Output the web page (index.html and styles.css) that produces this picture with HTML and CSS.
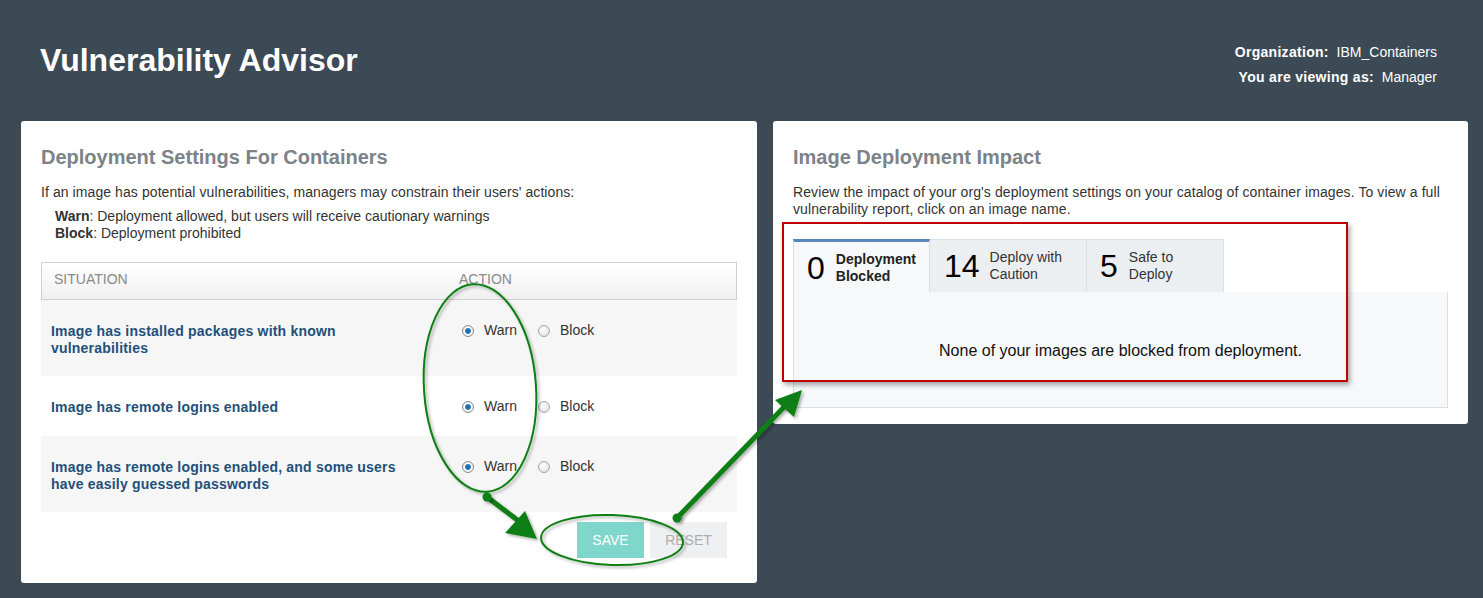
FILE: index.html
```html
<!DOCTYPE html>
<html>
<head>
<meta charset="utf-8">
<title>Vulnerability Advisor</title>
<link rel="stylesheet" href="styles.css">
</head>
<body>
<div class="page">
  <header class="topbar">
    <h1 class="title">Vulnerability Advisor</h1>
    <div class="org">
      <div class="org-line"><b>Organization:</b>&nbsp; IBM_Containers</div>
      <div class="org-line"><b>You are viewing as:</b>&nbsp; Manager</div>
    </div>
  </header>

  <main class="cards">
    <section class="card card-left">
      <h2 class="card-title">Deployment Settings For Containers</h2>
      <p class="desc">If an image has potential vulnerabilities, managers may constrain their users' actions:</p>
      <div class="legend">
        <div><b>Warn</b>: Deployment allowed, but users will receive cautionary warnings</div>
        <div><b>Block</b>: Deployment prohibited</div>
      </div>

      <div class="table">
        <div class="thead">
          <div class="col-sit">SITUATION</div>
          <div class="col-act">ACTION</div>
        </div>
        <div class="row row-alt">
          <div class="col-sit sit">Image has installed packages with known vulnerabilities</div>
          <div class="col-act acts">
            <span class="opt"><span class="radio checked"></span>Warn</span>
            <span class="opt"><span class="radio"></span>Block</span>
          </div>
        </div>
        <div class="row">
          <div class="col-sit sit">Image has remote logins enabled</div>
          <div class="col-act acts">
            <span class="opt"><span class="radio checked"></span>Warn</span>
            <span class="opt"><span class="radio"></span>Block</span>
          </div>
        </div>
        <div class="row row-alt">
          <div class="col-sit sit">Image has remote logins enabled, and some users have easily guessed passwords</div>
          <div class="col-act acts">
            <span class="opt"><span class="radio checked"></span>Warn</span>
            <span class="opt"><span class="radio"></span>Block</span>
          </div>
        </div>
      </div>

      <div class="buttons">
        <button class="btn btn-save">SAVE</button>
        <button class="btn btn-reset">RESET</button>
      </div>
    </section>

    <section class="card card-right">
      <h2 class="card-title">Image Deployment Impact</h2>
      <p class="desc desc-right">Review the impact of your org's deployment settings on your catalog of container images. To view a full vulnerability report, click on an image name.</p>

      <div class="tabs">
        <div class="tabstrip">
          <div class="tab tab-active tab-1">
            <span class="tab-num">0</span>
            <span class="tab-label bold">Deployment<br>Blocked</span>
          </div>
          <div class="tab tab-2">
            <span class="tab-num">14</span>
            <span class="tab-label">Deploy with<br>Caution</span>
          </div>
          <div class="tab tab-3">
            <span class="tab-num">5</span>
            <span class="tab-label">Safe to<br>Deploy</span>
          </div>
        </div>
        <div class="panel">None of your images are blocked from deployment.</div>
      </div>
    </section>
  </main>

  <div class="redbox"></div>

  <svg class="annot" width="1483" height="598" viewBox="0 0 1483 598">
    <defs>
      <filter id="sh" x="-20%" y="-20%" width="140%" height="140%">
        <feDropShadow dx="2" dy="2" stdDeviation="1.5" flood-color="#000" flood-opacity="0.3"/>
      </filter>
    </defs>
    <g filter="url(#sh)" fill="none" stroke="#0e7f12">
      <ellipse cx="480" cy="388" rx="56" ry="104" transform="rotate(-4 480 388)" stroke-width="2"/>
      <ellipse cx="612" cy="540" rx="71" ry="25" transform="rotate(2 612 540)" stroke-width="2"/>
      <line x1="487" y1="497" x2="520" y2="522" stroke-width="5"/>
      <line x1="677" y1="518" x2="786" y2="405" stroke-width="5"/>
    </g>
    <g filter="url(#sh)" fill="#0e7f12">
      <circle cx="487" cy="497" r="4.5"/>
      <polygon points="537,539 505,533 525,511"/>
      <circle cx="677" cy="518" r="4.5"/>
      <polygon points="802,390 775,400 794,417"/>
    </g>
  </svg>
</div>
</body>
</html>
```
FILE: styles.css
```css
* { box-sizing: border-box; }

html, body {
  margin: 0;
  padding: 0;
}

body {
  background: #3c4a55;
  font-family: "Liberation Sans", Arial, sans-serif;
  color: #333;
  width: 1483px;
  height: 598px;
  overflow: hidden;
}

.page {
  position: relative;
  width: 1483px;
  height: 598px;
}

.topbar {
  height: 121px;
  display: flex;
  justify-content: space-between;
  align-items: flex-start;
  padding: 0 46px 0 40px;
}

.title {
  margin: 41px 0 0;
  font-size: 32px;
  line-height: 38px;
  font-weight: bold;
  color: #fff;
}

.org {
  margin-top: 40px;
  text-align: right;
  color: #fff;
  font-size: 14px;
  line-height: 25px;
}

.org-line b {
  font-weight: bold;
  letter-spacing: 0.3px;
}

.cards {
  display: flex;
  align-items: flex-start;
  gap: 16px;
  padding-left: 21px;
}

.card {
  background: #fff;
  border-radius: 3px;
  padding: 24px 20px 0;
}

.card-left {
  width: 736px;
  height: 462px;
}

.card-right {
  width: 695px;
  height: 303px;
}

.card-title {
  margin: 0 0 15px;
  font-size: 20px;
  line-height: 24px;
  font-weight: bold;
  color: #7b8389;
}

.desc {
  margin: 0;
  font-size: 14px;
  line-height: 17px;
  color: #333;
  letter-spacing: 0.08px;
}

.legend {
  margin: 7px 0 0 14px;
  font-size: 14px;
  line-height: 17px;
  color: #333;
}

.legend b { color: #333; }

.table {
  margin-top: 20px;
  width: 696px;
}

.thead {
  display: flex;
  height: 38px;
  align-items: center;
  border: 1px solid #cfcfcf;
  background: linear-gradient(#ffffff, #f0f0f0);
  color: #8a8a8a;
  font-size: 14px;
  padding-bottom: 4px;
}

.thead .col-sit { padding-left: 12px; width: 417px; }

.col-sit { width: 418px; }

.row {
  display: flex;
  align-items: flex-start;
  min-height: 60px;
  padding: 23px 0 19px;
  background: #fff;
}

.row-alt { background: #f6f6f6; }

.sit {
  padding-left: 10px;
  padding-right: 40px;
  font-size: 14px;
  line-height: 17px;
  font-weight: bold;
  color: #22507a;
  letter-spacing: 0.2px;
}

.acts {
  display: flex;
  font-size: 14px;
  line-height: 17px;
  color: #333;
  margin-top: -1px;
}

.opt {
  display: flex;
  align-items: center;
  margin-right: 21px;
}

.acts .opt:first-child { margin-left: 3px; }

.radio {
  display: inline-block;
  width: 12px;
  height: 12px;
  border-radius: 50%;
  border: 1px solid #a9a9a9;
  background: radial-gradient(circle at 40% 35%, #ffffff, #d9d9d9);
  margin-right: 10px;
}

.radio.checked {
  border-color: #8c8c8c;
  background: radial-gradient(circle, #1d5f96 0, #2a7fc0 2.5px, #ffffff 3.5px, #dcdcdc 6px);
}

.buttons {
  display: flex;
  justify-content: flex-end;
  gap: 6px;
  margin-top: 10px;
  padding-right: 10px;
}

.btn {
  height: 36px;
  border: none;
  font-family: "Liberation Sans", Arial, sans-serif;
  font-size: 14px;
  padding: 0;
}

.btn-save {
  width: 67px;
  background: #7fd6cb;
  color: #fff;
}

.btn-reset {
  width: 77px;
  background: #eef0f2;
  color: #a9adb1;
}

.desc-right {
  margin-bottom: 21px;
  letter-spacing: 0.1px;
}

.tabs {
  width: 655px;
}

.tabstrip {
  display: flex;
  height: 53px;
}

.tab {
  display: flex;
  align-items: center;
  height: 53px;
  background: #eceff1;
  border: 1px solid #dadfe2;
  border-bottom: none;
  border-left: none;
  padding-left: 13px;
}

.tab-1 { width: 137px; }
.tab-2 { width: 157px; padding-left: 14px; }
.tab-3 { width: 137px; }

.tab-active {
  background: #f7f8f9;
  border-top: 3px solid #5a87ba;
  border-left: 1px solid #dadfe2;
  padding-top: 1px;
}

.tab-num {
  font-size: 32px;
  line-height: 32px;
  color: #000;
  margin-right: 11px;
}

.tab-2 .tab-num { margin-right: 10px; }

.tab-label {
  font-size: 14px;
  line-height: 17px;
  color: #333;
}

.tab-label.bold {
  font-weight: bold;
  color: #222;
}

.panel {
  height: 116px;
  display: flex;
  align-items: center;
  justify-content: center;
  background: #f7f8f9;
  border: 1px solid #dcdfe2;
  border-top: none;
  font-size: 16px;
  color: #111;
  padding-top: 2px;
}

.redbox {
  position: absolute;
  left: 782px;
  top: 222px;
  width: 566px;
  height: 160px;
  border: 2px solid #c00000;
  box-shadow: 2px 3px 5px rgba(0, 0, 0, 0.35);
  pointer-events: none;
}

.annot {
  position: absolute;
  left: 0;
  top: 0;
  pointer-events: none;
}
```
